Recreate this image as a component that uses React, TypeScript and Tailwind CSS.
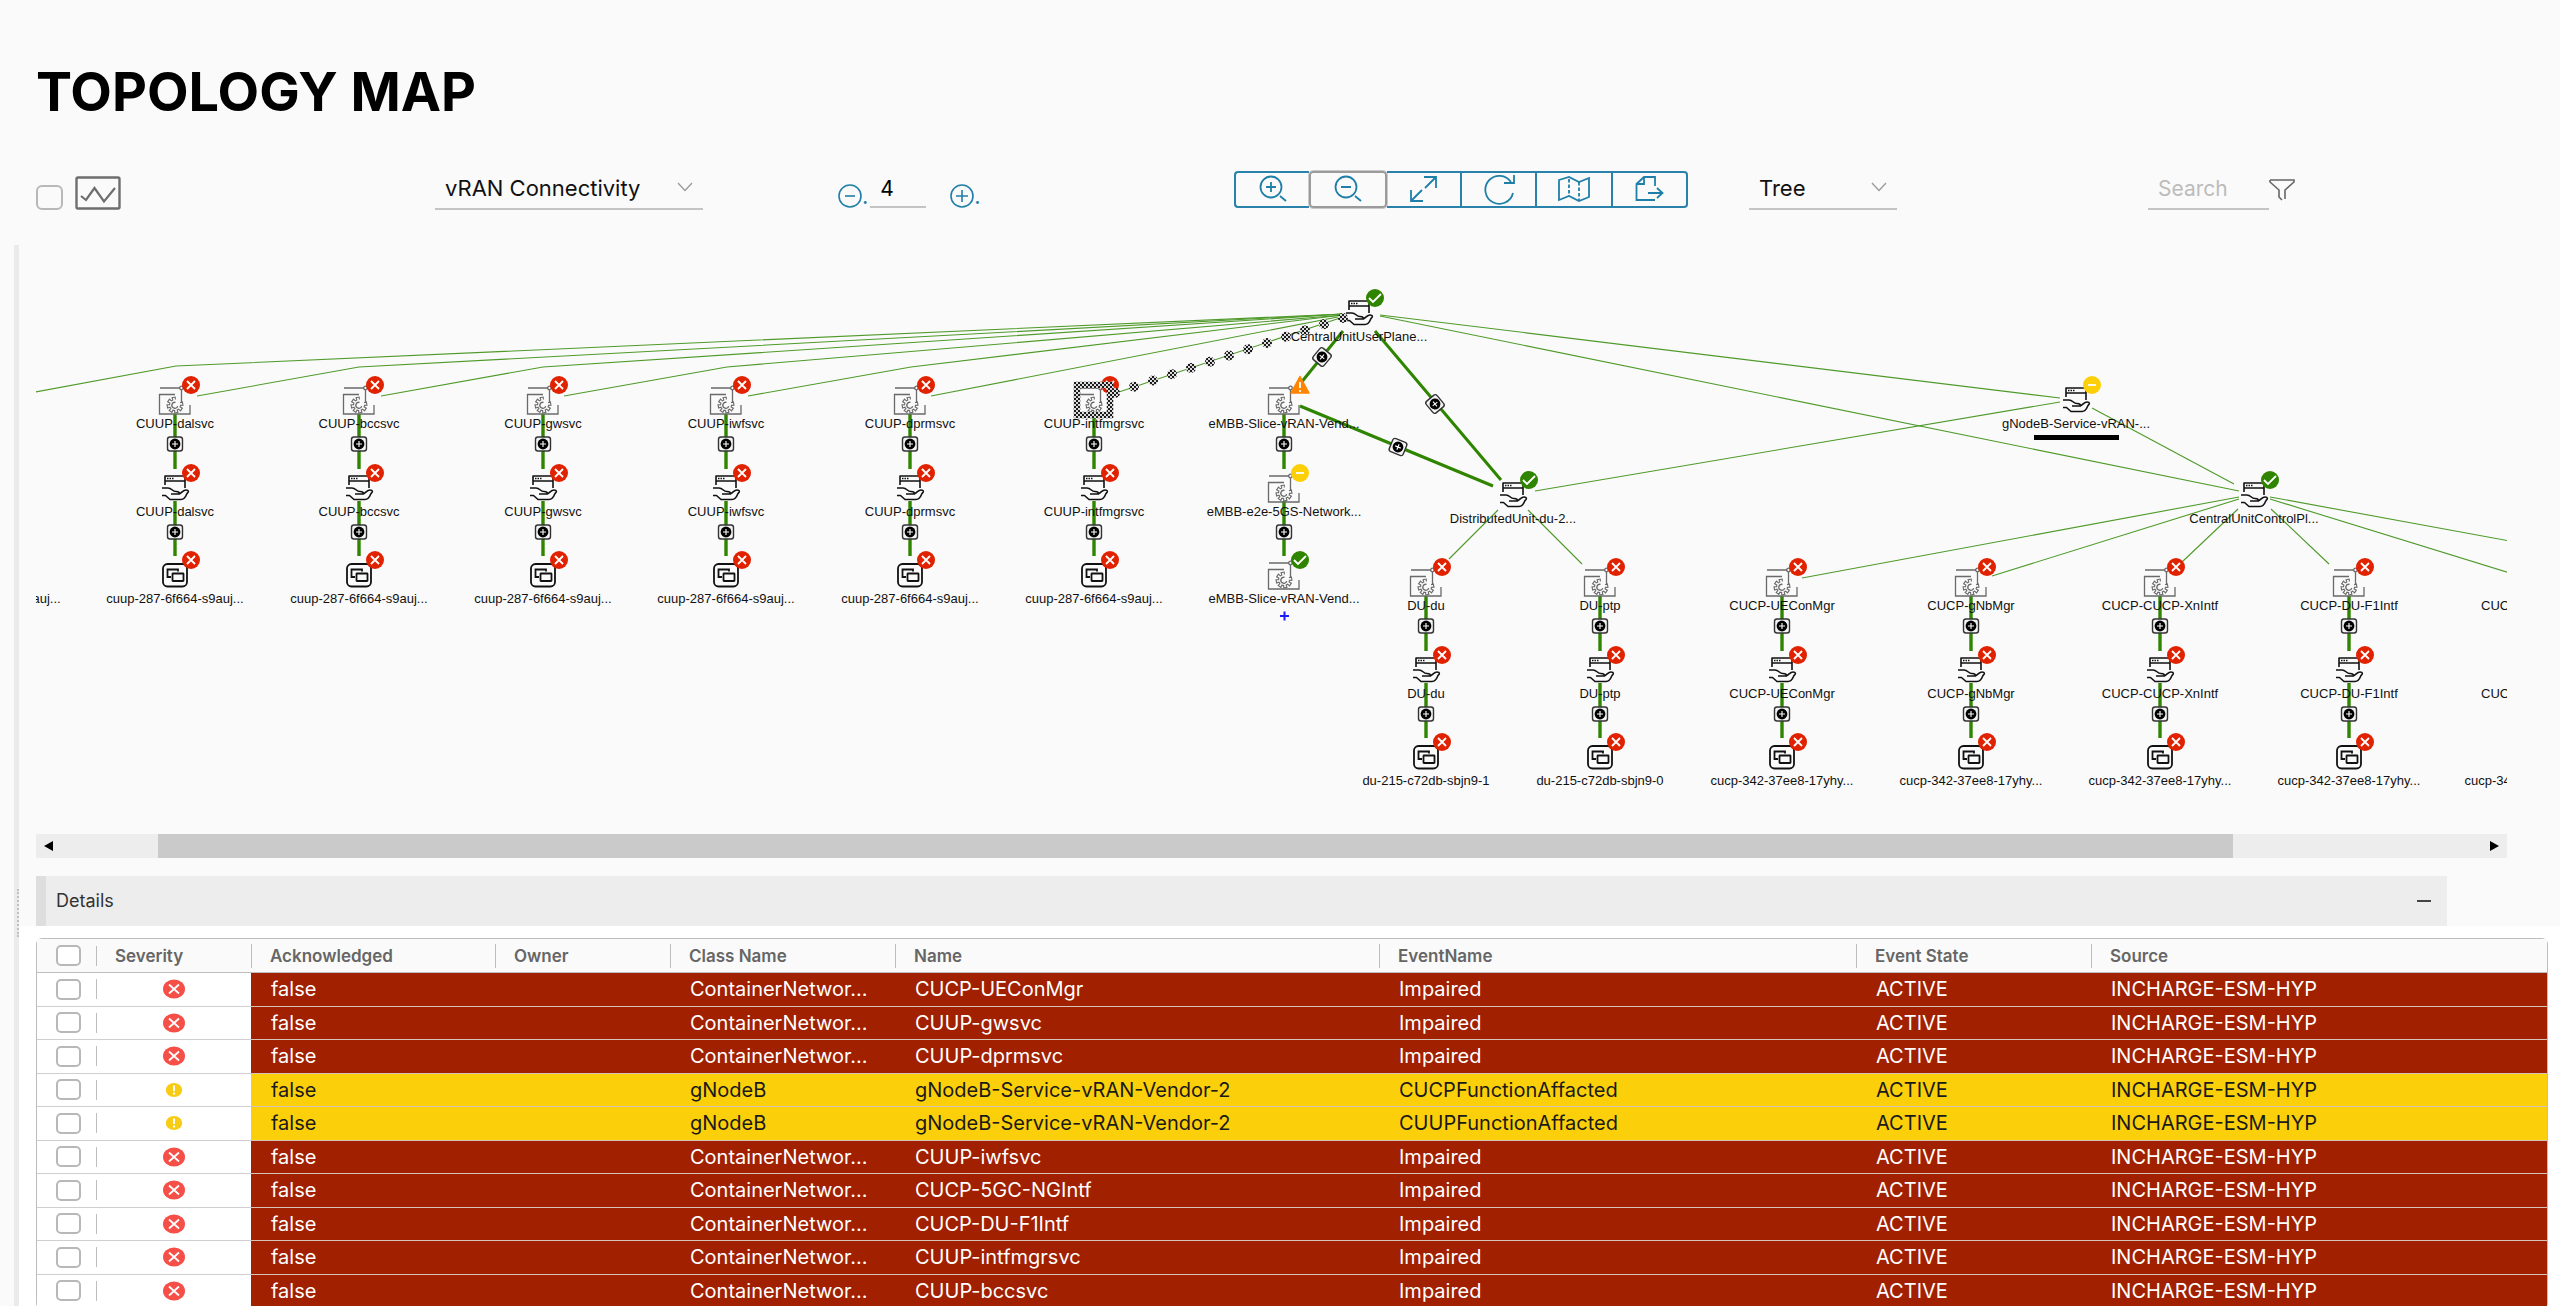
import type { ReactNode } from "react";

type Status = "critical" | "ok" | "minor" | "major";
type Kind = "service" | "hand" | "container";

const GREEN = "#2f8400";

const leftNames = ["dalsvc", "bccsvc", "gwsvc", "iwfsvc", "dprmsvc", "intfmgrsvc"];

const columns = [
  ...leftNames.map((name, i) => ({
    x: 175 + Math.round(i * 183.8),
    y: 385,
    label: `CUUP-${name}`,
    pod: "cuup-287-6f664-s9auj...",
  })),
  { x: 1426, y: 567, label: "DU-du", pod: "du-215-c72db-sbjn9-1" },
  { x: 1600, y: 567, label: "DU-ptp", pod: "du-215-c72db-sbjn9-0" },
  { x: 1782, y: 567, label: "CUCP-UEConMgr", pod: "cucp-342-37ee8-17yhy..." },
  { x: 1971, y: 567, label: "CUCP-gNbMgr", pod: "cucp-342-37ee8-17yhy..." },
  { x: 2160, y: 567, label: "CUCP-CUCP-XnIntf", pod: "cucp-342-37ee8-17yhy..." },
  { x: 2349, y: 567, label: "CUCP-DU-F1Intf", pod: "cucp-342-37ee8-17yhy..." },
  { x: 2536, y: 567, label: "CUCP-5GC-NGIntf", pod: "cucp-342-37ee8-17yhy..." },
];

const thinEdges = [
  "14,396 176,366 1343,314",
  "197,396 359,367 1343,314",
  "381,396 543,367 1343,314",
  "564,396 727,367 1343,315",
  "748,396 911,367 1343,315",
  "931,396 1343,316",
  "1116,393 1343,317",
  "1380,315 2060,398",
  "1380,316 2239,491",
  "2060,402 1535,491",
  "2092,408 2234,484",
  "1498,510 1449,559",
  "1528,510 1582,564",
  "2239,497 1802,578",
  "2239,499 1992,576",
  "2238,509 2182,562",
  "2271,509 2329,564",
  "2270,497 2510,541",
  "2270,499 2510,573",
];

const events = [
  ["ContainerNetwor...", "CUCP-UEConMgr", "Impaired"],
  ["ContainerNetwor...", "CUUP-gwsvc", "Impaired"],
  ["ContainerNetwor...", "CUUP-dprmsvc", "Impaired"],
  ["gNodeB", "gNodeB-Service-vRAN-Vendor-2", "CUCPFunctionAffacted"],
  ["gNodeB", "gNodeB-Service-vRAN-Vendor-2", "CUUPFunctionAffacted"],
  ["ContainerNetwor...", "CUUP-iwfsvc", "Impaired"],
  ["ContainerNetwor...", "CUCP-5GC-NGIntf", "Impaired"],
  ["ContainerNetwor...", "CUCP-DU-F1Intf", "Impaired"],
  ["ContainerNetwor...", "CUUP-intfmgrsvc", "Impaired"],
  ["ContainerNetwor...", "CUUP-bccsvc", "Impaired"],
];

const headers = ["Acknowledged", "Owner", "Class Name", "Name", "EventName", "Event State", "Source"];

// Open gear outline: the top-right part is left out
function gearPath() {
  const pts: string[] = [];
  for (let i = 0; i < 7; i++) {
    const a = (i * 45 * Math.PI) / 180;
    for (const [da, r] of [
      [-0.24, 5.5],
      [-0.2, 8],
      [0.2, 8],
      [0.24, 5.5],
    ]) {
      const t = a + da;
      pts.push(`${(Math.cos(t) * r).toFixed(1)},${(Math.sin(t) * r).toFixed(1)}`);
    }
  }
  return `M${pts.join("L")}`;
}

const GEAR = gearPath();

function Badge({ x, y, status }: { x: number; y: number; status: Status }) {
  if (status === "major") {
    return (
      <g transform={`translate(${x} ${y})`}>
        <path d="M0-8.5L9 8H-9Z" fill="#ff8400" stroke="#ff8400" strokeWidth="1.5" strokeLinejoin="round" />
        <path d="M0-3V3M0 5V7" stroke="#fff" strokeWidth="1.8" />
      </g>
    );
  }
  const fill = { critical: "#e12200", ok: GREEN, minor: "#fdcf08" }[status];
  const mark = { critical: "M-4-4L4 4M4-4L-4 4", ok: "M-6 0L-2 4L6-4", minor: "M-4 0H4" }[status];
  return (
    <g transform={`translate(${x} ${y})`}>
      <circle r="9" fill={fill} />
      <path d={mark} stroke="#fff" strokeWidth="1.8" fill="none" />
    </g>
  );
}

function NodeIcon({ kind }: { kind: Kind }) {
  if (kind === "service") {
    return (
      <g fill="none" stroke="#6a6a6a" strokeWidth="1.3">
        <path d="M-15 3H5M6.500 5V18M0 9.500H-15.500V29H15V20" />
        <circle cx="6.500" cy="3" r="1.800" />
        <g transform="translate(0 20) rotate(-10)">
          <path d={GEAR} strokeWidth="1.1" />
          <path d="M2.500 1.500A3 3 0 1 1 1-2.500" />
        </g>
      </g>
    );
  }
  if (kind === "hand") {
    return (
      <g fill="none" stroke="#111" strokeWidth="1.6" strokeLinejoin="round">
        <path d="M-10 12V3H10V15M-10 8H10" />
        <path d="M-8 5.500H-1" strokeDasharray="1.500 1" />
        <path d="M-13 15H-7C-3 15-3 18.500 1 18.500C4 18.500 5 20 4 21H-4" />
        <path d="M4 21C7 20 8 17 11 17C14 17 14 19 12 20.500C11 23 9 26.500 6 26.500H-5L-9.500 22.500H-13" />
      </g>
    );
  }
  return (
    <g fill="none" stroke="#111" strokeWidth="1.8">
      <rect x="-12" y="4" width="24" height="22.500" rx="4.500" fill="#fafafa" />
      <path d="M-4 17H-7.500V9.500H3V11.500" />
      <rect x="-2.500" y="13.500" width="11" height="7.500" rx="0.500" />
    </g>
  );
}

function MapNode({ x, y, kind, status, label }: { x: number; y: number; kind: Kind; status: Status; label: string }) {
  return (
    <g>
      <g transform={`translate(${x} ${y})`}>
        <NodeIcon kind={kind} />
      </g>
      <Badge x={x + 16} y={y} status={status} />
      <text x={x} y={y + 43} textAnchor="middle" fill="#111">
        {label}
      </text>
    </g>
  );
}

function Connector({ x, y, angle = 0 }: { x: number; y: number; angle?: number }) {
  return (
    <g transform={`translate(${x} ${y}) rotate(${angle})`}>
      <rect x="-7.500" y="-7" width="15" height="14" rx="2.500" fill="#f4f4f4" stroke="#333" strokeWidth="1.4" />
      <circle r="5.400" fill="#000" />
      <path d="M-3 0H3M0-3V3" stroke="#fff" strokeWidth="1.1" />
    </g>
  );
}

function VerticalLinks({ x, y }: { x: number; y: number }) {
  return (
    <g>
      <path d={`M${x} ${y + 29}V${y + 84}M${x} ${y + 116}V${y + 171}`} stroke={GREEN} strokeWidth="3.400" />
      <Connector x={x} y={y + 59} />
      <Connector x={x} y={y + 147} />
    </g>
  );
}

function TopologyGraph() {
  return (
    <svg
      viewBox="36 245 2471 589"
      className="block h-auto w-full font-['Liberation_Sans',Arial,sans-serif] text-[13px]"
      role="img"
      aria-label="Topology map"
    >
      <defs>
        <pattern id="checker" width="4" height="4" patternUnits="userSpaceOnUse">
          <rect width="4" height="4" fill="#dcdcdc" />
          <path d="M0 0H2V4H4V2H0Z" fill="#1c1c1c" />
        </pattern>
      </defs>

      <g fill="none" stroke="#4f9a2a" strokeWidth="1.100">
        {thinEdges.map((points) => (
          <polyline key={points} points={points} />
        ))}
      </g>
      <path
        d="M1343 331L1300 384M1375 331L1501 480M1300 406L1493 486"
        fill="none"
        stroke={GREEN}
        strokeWidth="3"
      />

      <text x="-8" y="603" textAnchor="middle" fill="#111">
        cuup-287-6f664-s9auj...
      </text>
      {columns.map((c) => (
        <g key={c.x}>
          <VerticalLinks x={c.x} y={c.y} />
          <MapNode x={c.x} y={c.y} kind="service" status="critical" label={c.label} />
          <MapNode x={c.x} y={c.y + 88} kind="hand" status="critical" label={c.label} />
          <MapNode x={c.x} y={c.y + 175} kind="container" status="critical" label={c.pod} />
        </g>
      ))}

      <VerticalLinks x={1284} y={385} />
      <MapNode x={1284} y={385} kind="service" status="major" label="eMBB-Slice-vRAN-Vend..." />
      <MapNode x={1284} y={473} kind="service" status="minor" label="eMBB-e2e-5GS-Network..." />
      <MapNode x={1284} y={560} kind="service" status="ok" label="eMBB-Slice-vRAN-Vend..." />
      <path d="M1280 616H1289M1284.500 611.500V620.500" stroke="#1a1aff" strokeWidth="2" />

      <MapNode x={1359} y={298} kind="hand" status="ok" label="CentralUnitUserPlane..." />
      <MapNode x={1513} y={480} kind="hand" status="ok" label="DistributedUnit-du-2..." />
      <MapNode x={2076} y={385} kind="hand" status="minor" label="gNodeB-Service-vRAN-..." />
      <MapNode x={2254} y={480} kind="hand" status="ok" label="CentralUnitControlPl..." />
      <rect x="2034" y="435" width="85" height="5" fill="#000" />

      <Connector x={1322} y={357} angle={-50} />
      <Connector x={1435} y={404} angle={50} />
      <Connector x={1398} y={447} angle={22} />

      {/* highlighted path from the selected node to its parent */}
      <g fill="url(#checker)">
        {Array.from({ length: 13 }, (_, i) => (
          <circle key={i} cx={1343 - i * 19} cy={318 + i * 6.25} r="5" />
        ))}
      </g>
      <rect x="1077" y="385" width="33" height="30" fill="none" stroke="url(#checker)" strokeWidth="6.500" />
    </svg>
  );
}

function ToolButton({ label, className, children }: { label: string; className: string; children: ReactNode }) {
  return (
    <button type="button" aria-label={label} className={`flex flex-1 items-center justify-center ${className}`}>
      <svg viewBox="-18 -16 36 32" className="h-8 w-9" fill="none" stroke="#1f7fa8" strokeWidth="1.8">
        {children}
      </svg>
    </button>
  );
}

function Chevron() {
  return (
    <svg viewBox="0 0 16 10" className="pointer-events-none absolute right-2.5 top-2.5 h-2.5 w-4" fill="none">
      <path d="M1 1L8 8.500L15 1" stroke="#9a9a9a" strokeWidth="1.3" />
    </svg>
  );
}

function Dropdown({ label, value, className }: { label: string; value: string; className: string }) {
  return (
    <div className={`relative ${className}`}>
      <select
        aria-label={label}
        className="h-[38px] w-full appearance-none border-b-2 border-[#c4c4c4] bg-transparent pb-1 pl-2.5 text-[22px] leading-7 text-[#111]"
      >
        <option>{value}</option>
      </select>
      <Chevron />
    </div>
  );
}

function StepButton({ label, plus }: { label: string; plus?: boolean }) {
  return (
    <button type="button" aria-label={label} className="mb-0.5 flex items-end text-[22px] leading-6 text-[#1f7fa8]">
      <svg viewBox="0 0 24 24" className="size-6" fill="none" stroke="#1f7fa8" strokeWidth="1.6">
        <circle cx="12" cy="12" r="11" />
        <path d={plus ? "M6 12H18M12 6V18" : "M7 12H17"} />
      </svg>
      .
    </button>
  );
}

function Toolbar() {
  return (
    <div className="grid grid-cols-[399fr_403fr_396fr_515fr_399fr_359fr] items-end">
      <div className="flex items-end gap-3">
        <input
          type="checkbox"
          aria-label="Show metrics"
          className="h-[25px] w-[27px] appearance-none rounded-md border-2 border-[#b8b8b8] bg-[#fafafa]"
        />
        <button type="button" aria-label="Metrics chart">
          <svg viewBox="0 0 46 34" className="h-[34px] w-[46px]" fill="none" stroke="#6e6e6e">
            <rect x="1.500" y="1.500" width="43" height="31" rx="1.500" strokeWidth="2.400" />
            <path d="M6 20L11 24L19.500 12L29 25.500L40 12" strokeWidth="2.200" />
          </svg>
        </button>
      </div>

      <Dropdown label="Connectivity" value="vRAN Connectivity" className="w-[268px]" />

      <div className="flex items-end">
        <StepButton label="Fewer hops" />
        <input
          aria-label="Hops"
          defaultValue="4"
          className="mb-0.5 ml-0.5 h-[38px] w-14 border-b-2 border-[#c4c4c4] bg-transparent px-2.5 text-[21px]"
        />
        <div className="w-6" />
        <StepButton label="More hops" plus />
      </div>

      <div className="mb-0.5 flex h-[37px] w-[454px]">
        <ToolButton label="Zoom in" className="rounded-l border-y-2 border-l-2 border-[#2a82ab]">
          <circle cx="-2" cy="-3" r="10.500" />
          <path d="M-7-3H3M-2-8V2M7 6L13 11" />
        </ToolButton>
        <ToolButton label="Zoom out" className="rounded border-2 border-[#9b9b9b] outline-1 outline-[#c9c9c9]">
          <circle cx="-2" cy="-3" r="10.500" />
          <path d="M-7-3H3M7 6L13 11" />
        </ToolButton>
        <ToolButton label="Fit" className="border-y-2 border-r-2 border-[#2a82ab]">
          <path d="M1-13H13V-2M13-13L2-2M-12 0V11H0M-12 11L-1 0" />
        </ToolButton>
        <ToolButton label="Refresh" className="border-y-2 border-r-2 border-[#2a82ab]">
          <path d="M14 3A14 14 0 1 1 12-8M15-15V-7H5" />
        </ToolButton>
        <ToolButton label="Overview" className="border-y-2 border-r-2 border-[#2a82ab]">
          <path d="M-15-10L-5-13L5-8L15-12V7L5 11L-5 6L-15 10Z" />
          <path d="M-5-11V6M5-8V10" strokeDasharray="3.500 2" />
        </ToolButton>
        <ToolButton label="Export" className="rounded-r border-y-2 border-r-2 border-[#2a82ab]">
          <path d="M6-4V-13H-5L-12.500-6V10H6M-5-13V-6H-12.500M-1 3H13M8-2L13.500 3L8 8" />
        </ToolButton>
      </div>

      <Dropdown label="Layout" value="Tree" className="w-[148px]" />

      <div className="flex items-start">
        <input
          type="search"
          aria-label="Search"
          placeholder="Search"
          className="h-[38px] w-[121px] border-b-2 border-[#c4c4c4] bg-transparent px-2.5 pb-1 text-[21px] placeholder:text-[#bcbcbc]"
        />
        <button type="button" aria-label="Filter" className="pt-1.5">
          <svg viewBox="0 0 26 24" className="h-6 w-[26px]" fill="none" stroke="#666" strokeWidth="1.6">
            <path d="M1 2H25V4L16 12V21M1 2V4L10 12V19L13 22" />
          </svg>
        </button>
      </div>
    </div>
  );
}

function SeverityIcon({ minor }: { minor: boolean }) {
  return minor ? (
    <svg viewBox="-11 -10 22 20" className="mx-auto h-5 w-[22px]" role="img" aria-label="Minor">
      <ellipse rx="8.200" ry="7" fill="#f8cc14" />
      <path d="M0-4.500V1M0 2.500V4.500" stroke="#fff" strokeWidth="2" />
    </svg>
  ) : (
    <svg viewBox="-11 -10 22 20" className="mx-auto h-5 w-[22px]" role="img" aria-label="Critical">
      <ellipse rx="11" ry="9.600" fill="#f54f47" />
      <path d="M-5-4.500L5 4.500M5-4.500L-5 4.500" stroke="#fff" strokeWidth="1.800" />
    </svg>
  );
}

function SelectCell({ label }: { label: string }) {
  return (
    <div className="flex items-center justify-between pl-[19px]">
      <input
        type="checkbox"
        aria-label={label}
        className="h-[21px] w-[25px] appearance-none rounded-[5px] border-2 border-[#b8b8b8] bg-white"
      />
      <span className="h-5 w-px bg-[#bdbdbd]" />
    </div>
  );
}

function EventTable() {
  return (
    <table className="h-[371px] w-full table-fixed border-separate border-spacing-0 rounded-md border border-[#bdbdbd] text-left">
      <colgroup>
        <col className="w-[60px]" />
        <col className="w-[154px]" />
        <col className="w-[244px]" />
        <col className="w-[175px]" />
        <col className="w-[225px]" />
        <col className="w-[484px]" />
        <col className="w-[477px]" />
        <col className="w-[235px]" />
        <col />
      </colgroup>
      <thead>
        <tr className="h-[34px] bg-[#fafafa] text-[17px] leading-6 text-[#666]">
          <th className="border-b border-[#bdbdbd] p-0">
            <SelectCell label="Select all" />
          </th>
          <th className="border-b border-[#bdbdbd] py-0 pl-[18px] font-semibold">Severity</th>
          {headers.map((h) => (
            <th key={h} className="border-b border-[#bdbdbd] p-0 font-semibold">
              <div className="border-l border-[#bdbdbd] pl-[18px]">{h}</div>
            </th>
          ))}
        </tr>
      </thead>
      <tbody>
        {events.map(([className, name, event]) => {
          const minor = className === "gNodeB";
          const values = ["false", "", className, name, event, "ACTIVE", "INCHARGE-ESM-HYP"];
          return (
            <tr key={name + event} className={minor ? "bg-[#fccf0b] text-[#1a1a1a]" : "bg-[#a12000] text-white"}>
              <td className="border-b border-[#cfcfcf] bg-white p-0">
                <SelectCell label={`Select ${name}`} />
              </td>
              <td className="border-b border-[#cfcfcf] bg-white p-0">
                <SeverityIcon minor={minor} />
              </td>
              {values.map((v, i) => (
                <td
                  key={i}
                  className="overflow-hidden whitespace-nowrap border-b border-[#d5c3b8] py-0 pl-5 pr-0 text-[20px] leading-6"
                >
                  {v}
                </td>
              ))}
            </tr>
          );
        })}
      </tbody>
    </table>
  );
}

export default function App() {
  return (
    <div className="flex h-screen flex-col overflow-hidden bg-[#fafafa] font-[Inter,sans-serif] text-black">
      <header className="pl-9 pr-[53px] pt-[60px]">
        <h1 className="mb-[46px] text-[54px] font-bold leading-[64px]">TOPOLOGY MAP</h1>
        <Toolbar />
      </header>

      <div className="mt-[35px] flex min-h-0 flex-1">
        <div className="ml-[14px] flex w-[5px] shrink-0 justify-end bg-[#ebebeb] pt-[644px]">
          <div className="h-12 border-l-2 border-dotted border-[#c0c0c0]" />
        </div>

        <main className="min-w-0 flex-1">
          <section className="pl-[17px] pr-[53px]">
            <TopologyGraph />
            <div className="flex h-6 items-center bg-[#ededed]">
              <button type="button" aria-label="Scroll left" className="w-[122px] pl-2">
                <svg viewBox="0 0 9 10" className="h-2.5 w-[9px]">
                  <path d="M9 0V10L0 5Z" />
                </svg>
              </button>
              <div className="h-full flex-1 bg-[#cacaca]" />
              <button type="button" aria-label="Scroll right" className="flex w-[274px] justify-end pr-2">
                <svg viewBox="0 0 9 10" className="h-2.5 w-[9px]">
                  <path d="M0 0V10L9 5Z" />
                </svg>
              </button>
            </div>
            <div className="mr-[60px] mt-[18px] flex h-[50px] items-center justify-between border-l-[10px] border-[#dedede] bg-[#ededed] pl-2.5 pr-4">
              <h2 className="text-[18px] leading-6 text-[#333]">Details</h2>
              <button type="button" aria-label="Collapse details" className="flex h-6 items-center">
                <span className="h-0.5 w-3.5 bg-[#444]" />
              </button>
            </div>
          </section>
          <section className="bg-white pl-[17px] pr-3 pt-3">
            <EventTable />
          </section>
        </main>
      </div>
    </div>
  );
}
